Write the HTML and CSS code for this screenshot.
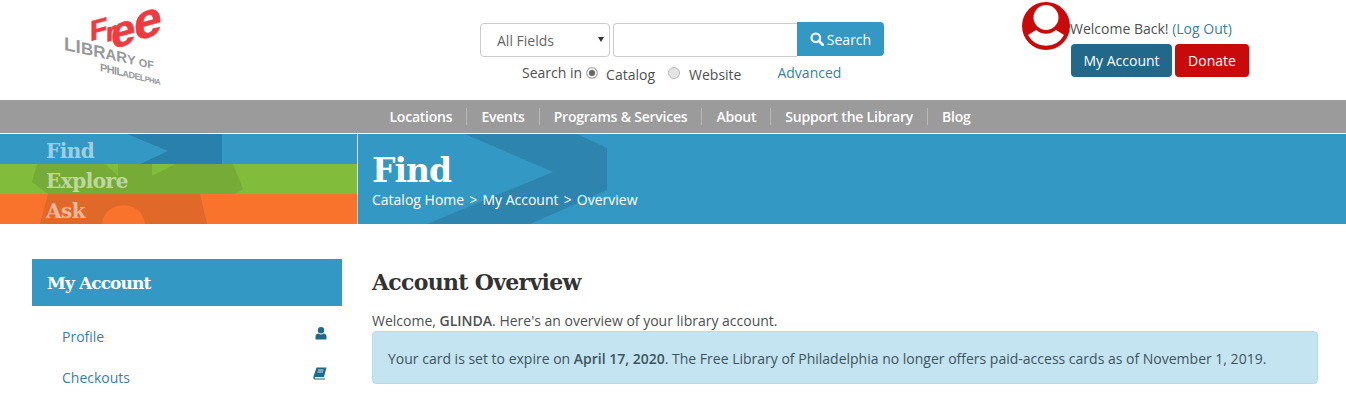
FILE: index.html
```html
<!DOCTYPE html>
<html lang="en">
<head>
    <meta charset="UTF-8">
    <title>Account Overview - Free Library of Philadelphia</title>
    <link rel="stylesheet" href="styles.css">
</head>
<body>

    <header class="top">
        <a class="logo" href="#" aria-label="Free Library of Philadelphia">
            <svg width="110" height="90" viewBox="0 0 110 90">
                <text class="logo-free" transform="translate(29 37) skewY(-15)" font-size="28">F</text>
                <text class="logo-free" transform="translate(45 38) skewY(-15)" font-size="26">r</text>
                <text class="logo-free" transform="translate(50 45) skewY(-15)" font-size="44">e</text>
                <text class="logo-free" transform="translate(73 37) skewY(-15)" font-size="50">e</text>
                <text class="logo-lib" transform="translate(3 46) skewY(12)"><tspan font-size="19">LI</tspan><tspan font-size="17">BR</tspan><tspan font-size="15">AR</tspan><tspan font-size="13">Y</tspan><tspan font-size="11"> OF</tspan></text>
                <text class="logo-lib logo-city" transform="translate(39 67) skewY(13)"><tspan font-size="11">PHIL</tspan><tspan font-size="9">ADEL</tspan><tspan font-size="7.500">PHIA</tspan></text>
            </svg>
        </a>

        <form class="search">
            <div class="search-row">
                <div class="select-wrap">
                    <select class="search-type">
                        <option>All Fields</option>
                    </select>
                </div>
                <input class="search-box" type="text">
                <button class="search-btn" type="button">
                    <svg class="search-icon" width="14" height="14" viewBox="0 0 14 14"><circle cx="5.800" cy="5.800" r="4.300" fill="none" stroke="#fff" stroke-width="2.200"/><path d="M9 9l4 4" stroke="#fff" stroke-width="2.600" stroke-linecap="round"/></svg>
                    Search
                </button>
            </div>
            <div class="search-opts">
                <span class="search-in">Search in</span>
                <input class="radio" type="radio" name="where" checked>
                <span class="opt">Catalog</span>
                <input class="radio radio-2" type="radio" name="where">
                <span class="opt">Website</span>
                <a class="advanced" href="#">Advanced</a>
            </div>
        </form>

        <div class="account">
            <svg class="avatar" width="48" height="48" viewBox="0 0 48 48">
                <circle cx="24" cy="24" r="24" fill="#c90a0a"/>
                <circle cx="24" cy="15.500" r="12.500" fill="#fff"/>
                <path d="M6 33L14 28A15.500 15.500 0 0 0 34 28L42 33A20.500 20.500 0 0 1 6 33z" fill="#fff"/>
            </svg>
            <div class="account-side">
                <p class="welcome">Welcome Back! <a href="#">(Log Out)</a></p>
                <div class="account-btns">
                    <a class="btn btn-account" href="#">My Account</a>
                    <a class="btn btn-donate" href="#">Donate</a>
                </div>
            </div>
        </div>
    </header>

    <nav class="mainnav">
        <a href="#">Locations</a>
        <a href="#">Events</a>
        <a href="#">Programs &amp; Services</a>
        <a href="#">About</a>
        <a href="#">Support the Library</a>
        <a href="#">Blog</a>
    </nav>

    <section class="banner">
        <div class="tabs">
            <svg class="tabs-art" width="357" height="90" viewBox="0 0 357 90">
                <path d="M127 0H222V30H140L168 17z" fill="#2a80ac"/>
                <path d="M37 30H233L243 55 235 60H48L32 48z" fill="#75ab36"/>
                <path d="M152 30H175L152 42zM105 30H118V42z" fill="#82bc3b"/>
                <path d="M48 60H200L207 90H145C143 65 104 65 102 90H40z" fill="#e06828"/>
            </svg>
            <a class="tab" href="#">Find</a>
            <a class="tab" href="#">Explore</a>
            <a class="tab" href="#">Ask</a>
        </div>
        <div class="banner-main">
            <svg class="banner-art" width="260" height="90" viewBox="0 0 260 90">
                <path d="M107 0H219L249 14V56L172 90H69L195 38z" fill="#2d84ae"/>
            </svg>
            <h1>Find</h1>
            <p class="crumbs">Catalog Home <span class="sep">&gt;</span> My Account <span class="sep">&gt;</span> Overview</p>
        </div>
    </section>

    <div class="page">
        <aside class="sidebar">
            <h3>My Account</h3>
            <ul>
                <li>
                    <a href="#">Profile</a>
                    <svg width="12" height="13" viewBox="0 0 12 13"><circle cx="6" cy="3.300" r="3.200" fill="#22688a"/><path d="M0.500 12.500V9.500C0.500 7.500 2 6.500 3.500 6.500 5 7.700 7 7.700 8.500 6.500 10 6.500 11.500 7.500 11.500 9.500V12.500z" fill="#22688a"/></svg>
                </li>
                <li>
                    <a href="#">Checkouts</a>
                    <svg class="book" width="14" height="13" viewBox="0 0 14 13"><path d="M3.500 0.500H13.500L11 10H2.500C1.500 10 1.500 11.500 2.500 11.500H12V12.500H2C0.500 12.500 0 11 0.500 9.500z" fill="#22688a"/><path d="M5 3H10.500M4.500 5H10" stroke="#fff" stroke-width="0.800"/></svg>
                </li>
            </ul>
        </aside>
        <main class="content">
            <h2>Account Overview</h2>
            <p class="intro">Welcome, <strong>GLINDA</strong>. Here's an overview of your library account.</p>
            <div class="alert">Your card is set to expire on <strong>April 17, 2020</strong>. The Free Library of Philadelphia no longer offers paid-access cards as of November 1, 2019.</div>
        </main>
    </div>

</body>
</html>
```

FILE: styles.css
```css
* {
    box-sizing: border-box;
}
body {
    font-family: "Open Sans", Arial, sans-serif;
    font-size: 14px;
    color: #505050;
    background-color: #fff;
    margin: 0;
    overflow: hidden;
}
a {
    color: #3b7f9f;
    text-decoration: none;
}
p {
    margin: 0;
}
strong {
    font-weight: 600;
}

/* header */
.top {
    display: flex;
    height: 100px;
}
.logo {
    display: block;
    width: 480px;
    padding: 4px 0 0 61px;
}
.logo-free {
    font-family: "Liberation Sans", Arial, sans-serif;
    font-weight: bold;
    fill: #ee3b3f;
    stroke: #ee3b3f;
    stroke-width: 0.7px;
}
.logo-lib {
    font-family: "Liberation Sans", Arial, sans-serif;
    font-weight: bold;
    fill: #97999b;
}
.logo-city {
    letter-spacing: -0.6px;
}
.search {
    width: 404px;
    padding-top: 22px;
}
.search-row {
    display: flex;
}
.select-wrap {
    position: relative;
    margin: 1px 3px 0 0;
}
.select-wrap::after {
    content: "";
    position: absolute;
    right: 6px;
    top: 14px;
    border-top: 5px solid #333;
    border-left: 3px solid transparent;
    border-right: 3px solid transparent;
}
.search-type {
    display: block;
    appearance: none;
    width: 130px;
    height: 34px;
    padding: 0 16px;
    font: 14px "Open Sans", Arial, sans-serif;
    color: #666;
    background: #fff;
    border: 1px solid #ccc;
    border-radius: 4px;
}
.search-box {
    width: 184px;
    height: 34px;
    margin-top: 1px;
    border: 1px solid #ccc;
    border-right: none;
    border-radius: 4px 0 0 4px;
}
.search-btn {
    display: flex;
    align-items: center;
    justify-content: center;
    gap: 3px;
    width: 87px;
    height: 34px;
    padding: 0;
    font: 14px "Open Sans", Arial, sans-serif;
    color: #fff;
    background-color: #3498c4;
    border: none;
    border-radius: 0 4px 4px 0;
}
.search-opts {
    display: flex;
    align-items: center;
    margin: 4px 0 0 42px;
}
.radio {
    appearance: none;
    width: 12px;
    height: 12px;
    margin: 0 8px 0 4px;
    background-color: #e4e4e4;
    border: 1px solid #bbb;
    border-radius: 50%;
}
.radio:checked {
    background-color: #666;
    box-shadow: inset 0 0 0 2px #eee;
}
.radio-2 {
    margin-left: 13px;
    margin-right: 9px;
}
.opt {
    padding-top: 4px;
}
.advanced {
    margin-left: 36px;
}
.account {
    display: flex;
    margin-left: 138px;
    padding-top: 2px;
}
.avatar {
    margin-right: 1px;
}
.account-side {
    padding-top: 17px;
}
.welcome {
    margin-left: -1px;
    height: 25px;
}
.account-btns {
    display: flex;
    gap: 3px;
}
.btn {
    display: block;
    height: 33px;
    line-height: 33px;
    padding: 0 12.500px;
    color: #fff;
    border-radius: 4px;
}
.btn-account {
    background-color: #22688a;
}
.btn-donate {
    padding: 0 13px;
    background-color: #c90a0a;
}

/* nav bar */
.mainnav {
    display: flex;
    justify-content: center;
    align-items: center;
    height: 33px;
    padding-left: 14px;
    background-color: #9b9b9b;
}
.mainnav a {
    padding: 0 14px;
    font-size: 14px;
    line-height: 17px;
    font-weight: 600;
    letter-spacing: -0.22px;
    color: #fff;
    border-left: 1px solid #b9b9b9;
}
.mainnav a:first-child {
    border-left: none;
}

/* banner */
.banner {
    display: flex;
    height: 90px;
    margin-top: 1px;
    overflow: hidden;
}
.tabs {
    position: relative;
    display: flex;
    flex-direction: column;
    width: 357px;
    background: linear-gradient(#3498c4 30px, #82bc3b 30px, #82bc3b 60px, #f9732d 60px);
}
.tabs-art {
    position: absolute;
    left: 0;
    top: 0;
}
.tab {
    position: relative;
    height: 30px;
    padding-left: 46px;
    font-family: "DejaVu Serif", serif;
    font-size: 20px;
    line-height: 34px;
    font-weight: bold;
    letter-spacing: -0.5px;
    color: rgba(255, 255, 255, 0.55);
}
.banner-main {
    position: relative;
    flex: 1;
    padding-left: 14px;
    background-color: #3498c4;
    border-left: 1px solid #d5e6d8;
}
.banner-art {
    position: absolute;
    left: 0;
    top: 0;
}
.banner-main h1 {
    position: relative;
    margin: 14px 0 0;
    font-family: "DejaVu Serif", serif;
    font-size: 33px;
    line-height: 46px;
    font-weight: bold;
    letter-spacing: -1px;
    color: #fff;
}
.crumbs {
    position: relative;
    margin-top: -4px;
    color: #fff;
    line-height: 20px;
}
.sep {
    margin: 0 1.500px;
}

/* page body */
.page {
    display: flex;
    padding: 35px 28px 0 32px;
}
.sidebar {
    width: 310px;
    margin-right: 30px;
}
.sidebar h3 {
    height: 47px;
    margin: 0;
    padding-left: 15px;
    font-family: "DejaVu Serif", serif;
    font-size: 17px;
    line-height: 49px;
    font-weight: bold;
    letter-spacing: -0.9px;
    color: #fff;
    background-color: #3498c4;
}
.sidebar ul {
    list-style-type: none;
    margin: 10px 0 0;
    padding: 0;
}
.sidebar li {
    display: flex;
    justify-content: space-between;
    height: 41px;
    padding: 11px 15px 0 30px;
}
.sidebar .book {
    margin-top: -1px;
}
.content {
    flex: 1;
}
.content h2 {
    margin: 6px 0 0;
    font-family: "DejaVu Serif", serif;
    font-size: 22px;
    line-height: 34px;
    font-weight: bold;
    letter-spacing: -0.7px;
    color: #333;
}
.intro {
    margin-top: 12px;
    line-height: 20px;
}
.alert {
    height: 53px;
    padding: 0 15px;
    line-height: 53px;
    color: #3d5560;
    background-color: #c4e4f1;
    border: 1px solid #b5dcec;
    border-radius: 4px;
}
```
